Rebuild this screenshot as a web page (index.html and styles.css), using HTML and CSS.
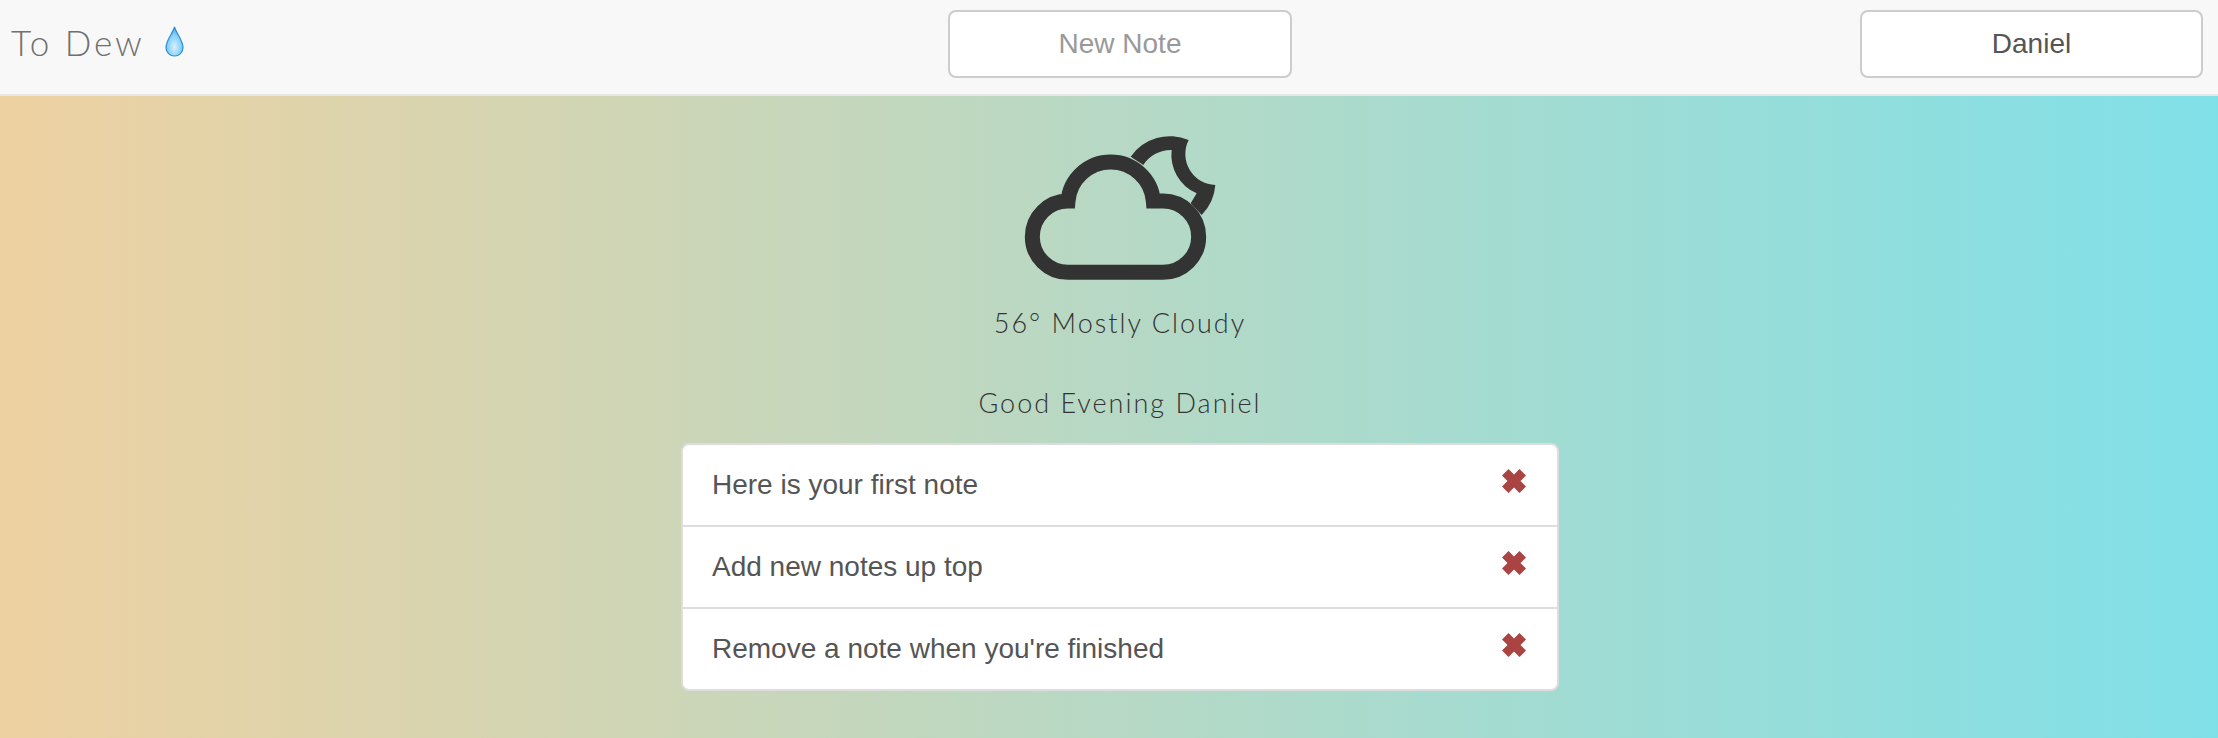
FILE: index.html
```html
<!DOCTYPE html>
<html lang="en">
<head>
    <meta charset="UTF-8">
    <meta name="viewport" content="width=device-width, initial-scale=1.0">
    <title>To Dew</title>
    <link rel="stylesheet" href="styles.css">
</head>
<body>
    <nav class="navbar">
        <div class="brand">
            <span class="brand-name">To Dew</span>
            <svg class="drop" viewBox="0 0 19 31" width="19" height="31">
                <defs>
                    <radialGradient id="dropFill" cx="50%" cy="68%" r="60%">
                        <stop offset="0" stop-color="#d6f0fd"/>
                        <stop offset="0.6" stop-color="#8fd3fa"/>
                        <stop offset="1" stop-color="#55b6f2"/>
                    </radialGradient>
                </defs>
                <path d="M9.5 1 C8 7 1 14 1 21.5 C1 26.5 5 30 9.5 30 C14 30 18 26.5 18 21.5 C18 14 11 7 9.5 1 Z" fill="url(#dropFill)" stroke="#2b8fd6" stroke-width="1.2"/>
            </svg>
        </div>
        <input class="nav-input" type="text" placeholder="New Note">
        <div></div>
        <button class="nav-button">Daniel</button>
    </nav>

    <main class="content">
        <!-- weather icon, coords are 3x the drawn size -->
        <svg class="weather-icon" viewBox="0 0 720 510" width="240" height="170">
            <path d="M204 457 A107 107 0 0 1 204 243 A128.5 128.5 0 0 1 460 243 H489 A107 107 0 0 1 489 457 Z" fill="none" stroke="#333" stroke-width="45"/>
            <path d="M392 110 A143 143 0 0 1 566 60 A93 93 0 0 0 646 195 A143 143 0 0 1 605 285 L572 250 L590 220 A125 125 0 0 1 515 90 A98 98 0 0 0 430 135 Z" fill="#333"/>
        </svg>
        <p class="weather-text">56° Mostly Cloudy</p>
        <p class="greeting">Good Evening Daniel</p>
        <ul class="notes">
            <li class="note"><span>Here is your first note</span><svg class="remove" viewBox="0 0 24 24" width="24" height="24"><path d="M6.5 0 L12 5.5 L17.5 0 L24 6.5 L18.5 12 L24 17.5 L17.5 24 L12 18.5 L6.5 24 L0 17.5 L5.5 12 L0 6.5 Z"/></svg></li>
            <li class="note"><span>Add new notes up top</span><svg class="remove" viewBox="0 0 24 24" width="24" height="24"><path d="M6.5 0 L12 5.5 L17.5 0 L24 6.5 L18.5 12 L24 17.5 L17.5 24 L12 18.5 L6.5 24 L0 17.5 L5.5 12 L0 6.5 Z"/></svg></li>
            <li class="note"><span>Remove a note when you're finished</span><svg class="remove" viewBox="0 0 24 24" width="24" height="24"><path d="M6.5 0 L12 5.5 L17.5 0 L24 6.5 L18.5 12 L24 17.5 L17.5 24 L12 18.5 L6.5 24 L0 17.5 L5.5 12 L0 6.5 Z"/></svg></li>
        </ul>
    </main>
</body>
</html>
```
FILE: styles.css
```css
html, body {
    margin: 0;
    height: 100%;
}
body {
    font-family: "Liberation Sans", Arial, sans-serif;
    color: #555;
    overflow: hidden;
    background: linear-gradient(to right, #eed1a1, #80e0e8);
}
.navbar {
    display: grid;
    grid-template-columns: 948px 344px 1fr 343px;
    align-items: start;
    height: 84px;
    padding: 10px 15px 0 0;
    background-color: #f8f8f8;
    border-bottom: 2px solid #e7e7e7;
}
.brand {
    display: flex;
    align-items: center;
    gap: 20px;
    height: 64px;
    padding-left: 11px;
}
.brand-name {
    font-family: Lato, sans-serif;
    font-weight: 300;
    font-size: 35px;
    letter-spacing: 2.9px;
    color: #707070;
}
.drop {
    margin-bottom: 1px;
}
.nav-input,
.nav-button {
    box-sizing: border-box;
    height: 68px;
    margin: 0;
    padding: 0 20px;
    border: 2px solid #ccc;
    border-radius: 8px;
    background-color: #fff;
    font-family: "Liberation Sans", Arial, sans-serif;
    font-size: 28px;
    color: #555;
}
.nav-input {
    text-align: center;
}
.nav-input::placeholder {
    color: #999;
    opacity: 1;
}
.content {
    display: flex;
    flex-direction: column;
    align-items: center;
    padding-left: 22px;
}
.weather-icon {
    display: block;
    margin-top: 24px;
}
.weather-text,
.greeting {
    margin: 0;
    font-family: Lato, sans-serif;
    font-weight: 300;
    font-size: 27px;
    line-height: 34px;
    letter-spacing: 2px;
    color: #333;
}
.weather-text {
    margin-top: 16px;
}
.greeting {
    margin-top: 46px;
}
.notes {
    box-sizing: border-box;
    width: 878px;
    margin: 23px 0 0;
    padding: 0;
    list-style: none;
    background-color: #fff;
    border: 2px solid #ddd;
    border-radius: 8px;
}
.note {
    display: flex;
    justify-content: space-between;
    align-items: center;
    height: 80px;
    padding: 0 30px 0 29px;
    font-size: 28px;
    border-bottom: 2px solid #ddd;
}
.note:last-child {
    border-bottom: none;
}
.remove {
    fill: #a94442;
    margin: 0 1px 9px 0;
}
```
